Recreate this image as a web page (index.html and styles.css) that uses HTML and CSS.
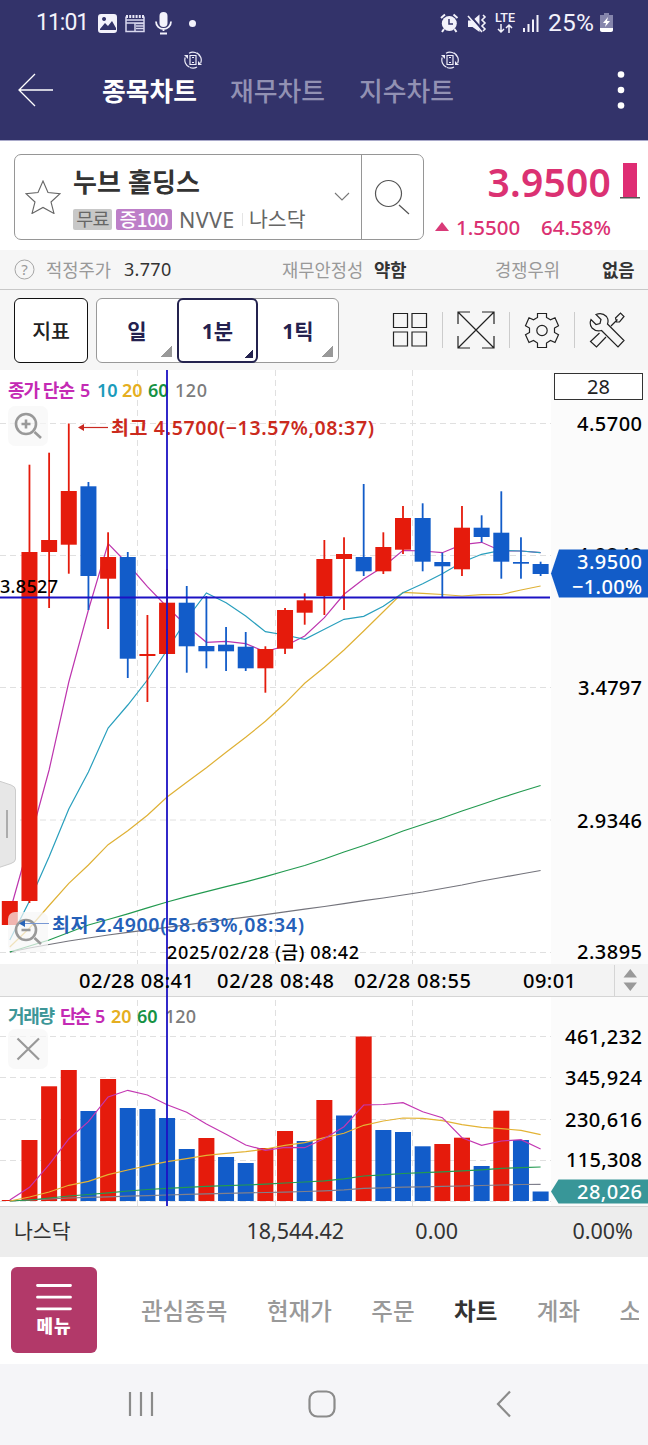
FILE: index.html
```html
<!DOCTYPE html>
<html lang="ko">
<head>
    <meta charset="UTF-8">
    <meta name="viewport" content="width=device-width, initial-scale=1.0">
    <title>종목차트</title>
    <link rel="stylesheet" href="styles.css">
</head>
<body>
    <header class="top">
        <div class="statusbar">
            <span class="clock">11:01</span>
            <svg class="status-left" width="102" height="26" viewBox="97 9 102 26">
                <path fill="#f3f2fb" fill-rule="evenodd" d="M101 13h13a3 3 0 0 1 3 3v13a3 3 0 0 1-3 3h-13a3 3 0 0 1-3-3V16a3 3 0 0 1 3-3zM100 28l5-6 3 3 4-5 4 7v2h-16zM104 16a2 2 0 1 0 .1 0z"/>
                <path fill="none" stroke="#d8d7ee" stroke-width="1.500" d="M126 15.500v15h18v-15M126 19h18M136 22.500h8M136 25h8M136 27.500h8M135 22v8M126 22h18"/>
                <path stroke="#e8e7f6" stroke-width="3" stroke-dasharray="2 1.200" d="M126 15.500h18"/>
                <rect x="159.500" y="11" width="8" height="15" rx="4" fill="#f3f2fb"/>
                <path fill="none" stroke="#f3f2fb" stroke-width="1.800" d="M156 20.500a7.500 7.500 0 0 0 15 0M163.500 28v2M160 32.500h7"/>
                <circle cx="192.500" cy="22.500" r="3.500" fill="#f3f2fb"/>
            </svg>
            <svg class="status-right" width="102" height="26" viewBox="439 9 102 26">
                <g fill="none" stroke="#f3f2fb" stroke-width="2">
                    <circle cx="449.300" cy="22.500" r="7.500" fill="#f3f2fb" stroke="none"/>
                    <path d="M441 17l4-3.500M457.500 17l-4-3.500M444 28l-2 3M454.500 28l2 3"/>
                    <path stroke="#33336a" stroke-width="1.500" d="M449 18v5h4"/>
                    <path fill="#f3f2fb" stroke="none" d="M468 19.500h4.500l7-6v17.500l-7-5H468z"/>
                    <path stroke="#33336a" stroke-width="2" d="M469.500 14l14 16"/>
                    <path stroke-width="1.600" d="M468 15l14 16M483 14l2 2-3 3 3 3-3 3 3 3-2 2"/>
                    <path stroke-width="1.500" d="M501 23v8M498 28l3 3 3-3M509 32v-8M506 27l3-3 3 3"/>
                    <path stroke-width="2" d="M524 27v4M528.500 23v8M533 18.500v12.500M537.500 14v17"/>
                </g>
                <text x="495" y="21" class="lte" textLength="20" lengthAdjust="spacingAndGlyphs">LTE</text>
            </svg>
            <span class="percent">25%</span>
            <svg width="13" height="20" viewBox="0 0 13 20">
                <path fill="#8585ac" d="M4 0h5v2h4v16H0V2h4z"/>
                <path fill="#fff" d="M0 15h13v2q0 2-2 2H2q-2 0-2-2zM8 4l-5 6h3l-1 4 5-6H7z"/>
            </svg>
        </div>
        <nav class="tabs">
            <svg class="back" width="36" height="34" viewBox="0 0 36 34">
                <path fill="none" stroke="#fff" stroke-width="1.300" d="M17 1L1 17l16 16M1 17h34"/>
            </svg>
            <span class="tab tab-on">종목차트
                <svg class="rotate" width="18" height="18" viewBox="0 0 18 18"><path fill="none" stroke="#eeedf8" stroke-width="1.200" d="M5.500 16.200A8 8 0 0 1 1.200 6.500M5 2.200A8 8 0 0 1 16 5.500M12.800 1.900A8 8 0 0 1 16.700 12M13 16a8 8 0 0 1-7 .5M6 4.500h6v9H6zM8 6.500h2M8 11.500h2"/><path fill="#eeedf8" d="M0 4h4v4zM18 14h-4v-4z"/></svg>
            </span>
            <span class="tab">재무차트</span>
            <span class="tab">지수차트
                <svg class="rotate" width="18" height="18" viewBox="0 0 18 18"><path fill="none" stroke="#eeedf8" stroke-width="1.200" d="M5.500 16.200A8 8 0 0 1 1.200 6.500M5 2.200A8 8 0 0 1 16 5.500M12.800 1.900A8 8 0 0 1 16.700 12M13 16a8 8 0 0 1-7 .5M6 4.500h6v9H6zM8 6.500h2M8 11.500h2"/><path fill="#eeedf8" d="M0 4h4v4zM18 14h-4v-4z"/></svg>
            </span>
            <svg class="more" width="8" height="40" viewBox="0 0 8 40" fill="#fff">
                <circle cx="4" cy="4.500" r="3.300"/><circle cx="4" cy="20" r="3.300"/><circle cx="4" cy="35.500" r="3.300"/>
            </svg>
        </nav>
    </header>

    <section class="stock">
        <div class="stock-box">
            <svg class="star" width="36" height="34" viewBox="0 0 36 34">
                <path fill="none" stroke="#666" stroke-width="1.100" d="M18 1l5 11.500 12 1.200-9 8.300 3 11.500-11-6-11 6 3-11.500-9-8.300 12-1.200z"/>
            </svg>
            <div class="stock-info">
                <div class="stock-name">누브 홀딩스</div>
                <div class="stock-meta">
                    <span class="tag tag-free">무료</span>
                    <span class="tag tag-margin">증100</span>
                    <span class="ticker">NVVE</span>
                    <span class="market">나스닥</span>
                </div>
            </div>
            <svg class="down" width="16" height="10" viewBox="0 0 16 10"><path fill="none" stroke="#777" stroke-width="1.100" d="M1 1l7 7 7-7"/></svg>
            <div class="search">
                <svg width="36" height="36" viewBox="0 0 36 36"><path fill="none" stroke="#555" stroke-width="1.200" d="M27.500 14.500a13 13 0 1 1-26 0a13 13 0 1 1 26 0M25 26l10 9"/></svg>
            </div>
        </div>
        <div class="price-box">
            <div class="price">3.9500</div>
            <div class="change">
                <svg width="14" height="9" viewBox="0 0 14 9"><path fill="#d93a78" d="M7 0l7 9H0z"/></svg>
                <span class="diff">1.5500</span>
                <span class="rate">64.58%</span>
            </div>
        </div>
        <svg class="mini" width="20" height="37" viewBox="0 0 20 37"><path fill="#df2d74" d="M3 0h14v34H3z"/><path fill="#555" d="M0 34h20v1.500H0z"/></svg>
    </section>

    <section class="facts">
        <svg width="21" height="21" viewBox="0 0 21 21"><circle cx="10.500" cy="10.500" r="9.500" fill="none" stroke="#a6a6a6"/><text x="10.500" y="16" class="help">?</text></svg>
        <span class="fact-label f1">적정주가</span><span class="fact-num">3.770</span>
        <span class="fact-label f2">재무안정성</span><b class="fact-value">약함</b>
        <span class="fact-label f3">경쟁우위</span><b class="fact-value f4">없음</b>
    </section>

    <section class="toolbar">
        <button class="indicator">지표</button>
        <div class="periods">
            <button class="period">일</button>
            <button class="period period-on">1분</button>
            <button class="period">1틱</button>
        </div>
        <div class="tools">
            <svg width="36" height="36" viewBox="0 0 36 36"><path d="M1.500 1.500h14v14h-14zM20 1.500h14.500v14H20zM1.500 20h14v14h-14zM20 20h14.500v14H20z"/></svg>
            <i></i>
            <svg width="38" height="38" viewBox="0 0 38 38"><path d="M1 1l36 36M37 1L1 37M1 13V1h12M25 1h12v12M37 25v12H25M13 37H1V25"/></svg>
            <i></i>
            <svg width="36" height="36" viewBox="0 0 36 36"><path d="M13.500 1.500h9v4l4 2.300 4.500-2 3.500 8-4 2.200v4.500l4 2.300-3.500 7.700-4.500-2-4 2.500v4.500h-9V31l-4-2.500-4.500 2-3.500-7.700 4-2.300V16l-4-2.200 3.500-8 4.500 2 4-2.300z"/><circle cx="18" cy="18.500" r="5.200"/></svg>
            <i></i>
            <svg width="36" height="36" viewBox="0 0 36 36"><path d="M7 2.500q6-2.500 10.500 2Q20 8 18.500 12L35 28.500 29 35 12.500 18.500Q7 20 3 16 0 12 2 7.500l5 5 4-1 1-4zM10.500 21L1.500 29.500l6 5.500 9.500-10M22 14l6.500-6.500M26.500 6l5-5 3.500 3.500-4.500 5.500h-3z"/></svg>
        </div>
    </section>

    <svg class="chart" width="648" height="836" viewBox="0 370 648 836">
        <rect x="551" y="370" width="97" height="836" fill="#fbfbfb"/>
        <g class="grid">
            <path d="M0 423.500h551M0 555.500h551M0 687.500h551M0 820h551M0 952.500h551M0 1036.500h551M0 1077.500h551M0 1119.500h551M0 1160.500h551M0 1201.500h551"/>
            <path d="M137.500 370v836M275.500 370v836M412.500 370v836"/>
        </g>

        <g id="averages" class="averages"></g>
        <g id="candles"></g>
        <g id="volumes"></g>
        <g id="volumeAverages" class="averages"></g>

        <rect x="0" y="964" width="648" height="33" fill="#f3f3f3"/>
        <path stroke="#d5d5d5" d="M0 996.500h648M614.500 965v31"/>
        <path fill="#999" d="M623.500 977.500h13.500l-6.700-8.500zM623.500 982.500h13.500l-6.700 8.500z"/>

        <g class="legend">
            <text x="8" y="397" textLength="67" fill="#c42ab4">종가 단순</text>
            <text x="80" y="397" fill="#c42ab4">5</text>
            <text x="97" y="397" fill="#1b9bbb">10</text>
            <text x="122" y="397" fill="#e5ae20">20</text>
            <text x="148" y="397" fill="#169244">60</text>
            <text x="175" y="397" textLength="32" fill="#7b7b7b" class="thin">120</text>
            <text x="8" y="1023" textLength="47" fill="#3d9697">거래량</text>
            <text x="60" y="1023" textLength="31" fill="#c42ab4">단순</text>
            <text x="95" y="1023" fill="#c42ab4">5</text>
            <text x="111" y="1023" fill="#e5ae20">20</text>
            <text x="137" y="1023" fill="#169244">60</text>
            <text x="165" y="1023" textLength="31" fill="#7b7b7b" class="thin">120</text>
        </g>

        <g class="control">
            <rect x="8" y="406" width="40" height="40" rx="7"/>
            <circle cx="26" cy="424" r="10"/><path d="M21.500 424h9M26 419.500v9M34.500 432l6.500 6"/>
            <rect x="8" y="912" width="40" height="40" rx="7"/>
            <circle cx="26" cy="930" r="10"/><path d="M21.500 930h9M34.500 938l6.500 6"/>
            <rect x="8" y="1029" width="40" height="40" rx="7"/>
            <path class="close" d="M17.500 1038.500l21.500 21M39 1038.500l-21.500 21"/>
        </g>

        <path stroke="#c92820" stroke-width="1.200" d="M83 427.500h25"/><path fill="#c92820" d="M78 427.500l6-3.500v7z"/>
        <text class="mark" x="111" y="435" textLength="263" fill="#cb2a1d">최고 4.5700(−13.57%,08:37)</text>
        <path stroke="#7898d4" d="M24 923.500h25"/><path fill="#2864b8" d="M19 923.500l6-3.500v7z"/>
        <text class="mark" x="52" y="932" textLength="252" fill="#2560b8">최저 2.4900(58.63%,08:34)</text>

        <path fill="#e7e7e7" stroke="#ccc" d="M-1 781l12 4q4.500 1.500 4.500 5v69q0 3-4.500 4.500L-1 867.500z"/>
        <path stroke="#999" stroke-width="1.500" d="M7 810v28"/>

        <path stroke="#1c12c4" stroke-width="1.800" d="M167 370v836M0 597.500h550"/>
        <text class="cross" x="0" y="593" textLength="58">3.8527</text>
        <text class="cross" x="167" y="959" textLength="192">2025/02/28 (금) 08:42</text>

        <rect x="554.500" y="373.500" width="88" height="26" fill="#fff" stroke="#333"/>
        <text x="587" y="394" class="count">28</text>
        <g class="axis">
            <text x="577" y="431" textLength="65">4.5700</text>
            <text x="577" y="562" textLength="65">4.0248</text>
            <text x="578" y="695" textLength="64">3.4797</text>
            <text x="577" y="828" textLength="65">2.9346</text>
            <text x="577" y="959" textLength="65">2.3895</text>
            <text x="79" y="988" textLength="115">02/28 08:41</text>
            <text x="217" y="988" textLength="117">02/28 08:48</text>
            <text x="354" y="988" textLength="117">02/28 08:55</text>
            <text x="523" y="988" textLength="53">09:01</text>
            <text x="565" y="1044" textLength="77">461,232</text>
            <text x="565" y="1085" textLength="77">345,924</text>
            <text x="565" y="1127" textLength="77">230,616</text>
            <text x="566" y="1167" textLength="76">115,308</text>
        </g>
        <path fill="#125cc8" d="M551 573.500l8-24h89V597.500h-89z"/>
        <path fill="#389698" d="M551 1191.500l7.500-12H648v24h-89.500z"/>
        <g class="axis axis-light">
            <text x="577" y="569" textLength="65">3.9500</text>
            <text x="572" y="594" textLength="70">−1.00%</text>
            <text x="577" y="1199" textLength="65">28,026</text>
        </g>
    </svg>

    <section class="index-row">
        <span>나스닥</span><span>18,544.42</span><span>0.00</span><span>0.00%</span>
    </section>

    <nav class="menu">
        <button class="menu-button">
            <svg width="36" height="27" viewBox="0 0 36 27"><path stroke="#fff" stroke-width="2.800" stroke-linecap="round" d="M1.500 1.500h33M1.500 13.200h33M1.500 24.800h33"/></svg>
            <span>메뉴</span>
        </button>
        <div class="menu-items">
            <span>관심종목</span><span>현재가</span><span>주문</span><span class="menu-on">차트</span><span>계좌</span><span class="cut">소</span>
        </div>
    </nav>

    <footer class="system-nav">
        <svg width="26" height="28" viewBox="0 0 26 28"><path d="M2 2v24M13 2v24M24 2v24"/></svg>
        <svg width="28" height="28" viewBox="0 0 28 28"><rect x="1.500" y="1.500" width="25" height="25" rx="8"/></svg>
        <svg width="16" height="28" viewBox="0 0 16 28"><path d="M14 1.500L2 14l12 12.500"/></svg>
    </footer>

    <script>
        const RED = '#e51b0c';
        const BLUE = '#125cc9';
        const STEP = 19.66;
        const FIRST = 9.8;
        const BASE = 1201;

        // color, high, body top, body bottom, low, volume top
        const bars = [
            ['r', 901, 901, 925, 925, 1200],
            ['r', 464.7, 552, 901, 903, 1140],
            ['r', 452.7, 540, 552, 608, 1086.3],
            ['r', 423.5, 491, 544.7, 573.7, 1070],
            ['b', 482, 486.3, 576, 610, 1111],
            ['r', 532.3, 557, 578.7, 629, 1079],
            ['b', 552, 557, 658.7, 678, 1108],
            ['r', 615, 654, 656, 702, 1109, 'b'],
            ['r', 569, 602.7, 654, 654, 1118, 'b'],
            ['b', 586, 602.7, 646.3, 672.7, 1149],
            ['b', 596, 646, 651.3, 668.3, 1138, 'r'],
            ['b', 627, 644.7, 651.3, 671, 1157],
            ['b', 632, 646.7, 668.3, 671, 1163],
            ['r', 646.3, 649, 668.3, 692.7, 1148],
            ['r', 608, 610, 648.7, 654, 1131],
            ['r', 593.3, 600.3, 612.7, 624.7, 1141, 'b'],
            ['r', 540, 559, 596, 615, 1100],
            ['r', 537.3, 554, 559, 610, 1115.5, 'b'],
            ['b', 484, 557, 571.3, 576, 1036.5, 'r'],
            ['r', 532.3, 547, 571.3, 574, 1130, 'b'],
            ['r', 506, 518, 549.7, 554, 1132, 'b'],
            ['b', 503.3, 518, 561.7, 571.3, 1146.3],
            ['b', 552.7, 562, 566.3, 597.3, 1144, 'r'],
            ['r', 506, 527.7, 569.3, 576, 1137.7],
            ['b', 515.3, 527.7, 537, 542.3, 1166],
            ['b', 491.3, 532.7, 561.7, 578.7, 1110.7, 'r'],
            ['b', 537.3, 562, 563.7, 578.7, 1140],
            ['b', 561.7, 564, 574, 576, 1191.5]
        ];

        const priceLines = {
            '#74747c': [952, 948, 944.5, 941, 938, 935, 932.3, 929.8, 927.3, 924.8, 922.2, 919.7, 917.1, 914.6, 911.9, 909.2, 906.5, 903.6, 900.6, 898, 895, 892, 888.5, 885, 881, 877.5, 874, 870.5],
            '#239a50': [952, 946, 940, 932.5, 925, 919.5, 913.8, 907.9, 902, 896.6, 891.7, 886.7, 881.8, 876.6, 871, 865.5, 859, 852, 845.5, 838.5, 831, 824.5, 818, 811, 804.5, 797.8, 791.5, 785.5],
            '#dfb135': [947, 928, 905.5, 883.3, 865, 844.7, 830.7, 815.3, 797, 782.3, 767.7, 752.3, 737.3, 721.3, 703.3, 683.3, 667.3, 650, 631, 611.7, 592.3, 593.3, 594.5, 596, 594.7, 594.5, 590, 586],
            '#bd35ae': [912, 842, 770, 682, 610, 543.7, 564, 586.7, 607, 626, 642.3, 641.3, 643.7, 651.7, 646, 636, 617.7, 594.3, 579, 566.7, 550.3, 551, 552.7, 544.7, 542.3, 551, 551, 552.7],
            '#299fbd': [940, 901, 856.7, 809, 772, 728, 705, 680, 650, 619, 593, 602.7, 616, 631.7, 635, 639.3, 629.3, 619.3, 616.3, 606.3, 592.7, 583.7, 573.7, 562.3, 554.3, 550.3, 551, 552.7]
        };

        const volumeLines = {
            '#80808c': [1201, 1200, 1199, 1198, 1197.3, 1196.8, 1196.2, 1195.6, 1195, 1194.4, 1193.9, 1193.4, 1192.9, 1192.5, 1192.2, 1191.5, 1190.8, 1189.8, 1188.3, 1187.8, 1187.2, 1186.8, 1186.4, 1186, 1185.5, 1185, 1184.5, 1184.3],
            '#239a50': [1201, 1200, 1198, 1196, 1194.5, 1192.8, 1191, 1189.5, 1188.3, 1187.3, 1186.4, 1185.6, 1185, 1184.2, 1183, 1182, 1180.8, 1178.9, 1176, 1174.8, 1173.5, 1172.6, 1171.8, 1170.9, 1169.8, 1168.3, 1167.6, 1167],
            '#e3b335': [1201, 1197, 1192, 1185.3, 1181.3, 1174.7, 1170, 1165.7, 1161.7, 1158.7, 1155.3, 1153.3, 1151.7, 1149, 1145.3, 1142.7, 1137.7, 1133.3, 1125.3, 1121, 1118, 1118.3, 1120.7, 1124.7, 1127.3, 1128.7, 1130.3, 1134.7],
            '#c337b2': [1200, 1187.3, 1164.7, 1139, 1121.7, 1097, 1090.3, 1095, 1104.7, 1112.3, 1124, 1134.3, 1145, 1150.3, 1147.3, 1147.7, 1138.5, 1126.7, 1105, 1104.5, 1102.7, 1111.7, 1117.7, 1137.7, 1145.3, 1141, 1139.7, 1149]
        };

        function rect(x, y, w, h, fill) {
            return `<rect x="${x}" y="${y}" width="${w}" height="${h}" fill="${fill}"/>`;
        }

        function drawLines(id, lines) {
            let html = '';
            for (const color in lines) {
                const points = lines[color].map((y, i) => (FIRST + i * STEP).toFixed(1) + ',' + y).join(' ');
                html += `<polyline points="${points}" stroke="${color}"/>`;
            }
            document.getElementById(id).innerHTML = html;
        }

        let candles = '';
        let volumes = '';
        bars.forEach(([kind, high, top, bottom, low, volume, volumeKind], i) => {
            const x = FIRST + i * STEP;
            const color = kind === 'r' ? RED : BLUE;
            candles += rect(x - 0.9, high, 1.8, low - high, color);
            candles += rect(x - 8, top, 16, bottom - top, color);
            volumes += rect(x - 8, volume, 16, BASE - volume, (volumeKind || kind) === 'r' ? RED : BLUE);
        });
        document.getElementById('candles').innerHTML = candles;
        document.getElementById('volumes').innerHTML = volumes;
        drawLines('averages', priceLines);
        drawLines('volumeAverages', volumeLines);
    </script>
</body>
</html>
```
FILE: styles.css
```css
* {
    box-sizing: border-box;
}
body {
    margin: 0;
    width: 648px;
    height: 1445px;
    overflow: hidden;
    font-family: "Noto Sans", "Noto Sans CJK KR", sans-serif;
    color: #333;
    background-color: #fff;
    white-space: nowrap;
}
button {
    padding: 0;
    font-family: inherit;
    background-color: #fff;
}
svg {
    display: block;
    flex: none;
}
.top {
    height: 141px;
    background-color: #33336a;
    border-bottom: 1px solid #a9a9ca;
}
.statusbar {
    display: flex;
    align-items: center;
    height: 45px;
    padding-left: 36px;
    color: #f3f2fb;
    font-family: Roboto, sans-serif;
    font-size: 23px;
}
.clock {
    width: 61px;
    letter-spacing: -1px;
}
.status-right {
    margin-left: 240px;
}
.lte {
    fill: #f3f2fb;
    font-size: 12px;
    font-weight: 500;
}
.percent {
    width: 52px;
    margin-left: 7px;
    font-size: 24.500px;
    letter-spacing: 0.2px;
}
.tabs {
    display: flex;
    align-items: center;
    height: 90px;
    padding-left: 18px;
}
.tab {
    position: relative;
    width: 129px;
    font-family: "Noto Sans CJK KR", sans-serif;
    font-size: 25.800px;
    font-weight: 500;
    line-height: 36px;
    color: #9291b3;
}
.tab-on {
    margin-left: 48px;
    width: 128px;
    color: #fff;
    font-weight: 700;
}
.rotate {
    position: absolute;
    left: 82px;
    top: -21px;
}
.more {
    margin-left: 129px;
}
.stock {
    display: flex;
    height: 109px;
    padding: 13px 0 0 14px;
}
.stock-box {
    display: flex;
    align-items: center;
    width: 410px;
    height: 86px;
    border: 1px solid #969696;
    border-radius: 7px;
}
.star {
    margin-left: 10px;
}
.stock-info {
    width: 257px;
    margin-left: 12px;
}
.stock-name {
    height: 44px;
    font-family: "Noto Sans CJK KR", sans-serif;
    font-size: 26px;
    font-weight: 700;
    line-height: 38px;
}
.stock-meta {
    display: flex;
    align-items: center;
    height: 26px;
    font-size: 20px;
    line-height: 24px;
    color: #666;
}
.tag {
    height: 21px;
    border-radius: 2px;
    font-family: "Noto Sans CJK KR", sans-serif;
    line-height: 19px;
    text-align: center;
    letter-spacing: -0.8px;
}
.tag-free {
    width: 39px;
    background-color: #c8c8c8;
    font-size: 18.500px;
}
.tag-margin {
    width: 56px;
    margin-left: 4px;
    background-color: #bd7fc8;
    color: #fff;
    font-size: 19px;
    font-weight: 500;
    letter-spacing: -0.3px;
}
.ticker {
    width: 64px;
    margin-left: 7px;
    font-size: 21.500px;
    letter-spacing: 0.4px;
    border-right: 1px solid #e5e5e5;
    line-height: 13px;
}
.market {
    margin-left: 6px;
    font-size: 20.500px;
}
.down {
    margin-left: 4px;
}
.search {
    display: flex;
    align-items: center;
    margin-left: 11px;
    padding-left: 12px;
    height: 84px;
    border-left: 1px solid #969696;
}
.price-box {
    width: 187px;
    text-align: right;
    color: #db3172;
}
.price {
    height: 53px;
    font-size: 39px;
    font-weight: 600;
    line-height: 55px;
    letter-spacing: 0.2px;
}
.change {
    display: flex;
    align-items: center;
    height: 39px;
    margin-left: 11px;
    font-size: 20.500px;
    font-weight: 500;
}
.diff {
    width: 85px;
    margin-left: 7px;
    text-align: left;
}
.mini {
    margin: 9px 0 0 9px;
}
.facts {
    display: flex;
    align-items: center;
    height: 40px;
    padding: 0 0 1px 14px;
    background-color: #f6f6f6;
    border-bottom: 1px solid #c8c8c8;
    font-size: 18px;
}
.help {
    fill: #999;
    font-size: 15px;
    text-anchor: middle;
}
.fact-label {
    color: #999;
    font-size: 17.700px;
}
.f1 {
    width: 78px;
    margin-left: 11px;
}
.fact-num {
    width: 158px;
    letter-spacing: 0.3px;
}
.f2 {
    width: 92px;
}
.fact-value {
    width: 121px;
    font-size: 17.700px;
}
.f3 {
    width: 107px;
}
.f4 {
    width: auto;
}
.toolbar {
    display: flex;
    align-items: center;
    height: 80px;
    padding-left: 14px;
    background-color: #f6f6f6;
}
.indicator {
    width: 74px;
    height: 65px;
    border: 1px solid #111;
    border-radius: 6px;
    font-size: 20.500px;
    font-weight: 500;
    color: #222;
}
.periods {
    display: flex;
    align-items: center;
    width: 243px;
    height: 65px;
    margin-left: 8px;
    background-color: #fff;
    border: 1px solid #999;
    border-radius: 6px;
}
.period {
    width: 80px;
    height: 63px;
    border: 0;
    border-radius: 6px;
    font-size: 21px;
    font-weight: 700;
    color: #24214f;
    background: linear-gradient(135deg, transparent 50%, #999 50%) right 5px bottom 5px / 11px 11px no-repeat;
}
.period-on {
    width: 81px;
    height: 65px;
    border: 2px solid #24234f;
    background: linear-gradient(135deg, transparent 50%, #24234f 50%) right 3px bottom 3px / 8px 8px no-repeat;
}
.tools {
    display: flex;
    align-items: center;
    margin-left: 53px;
    gap: 14px;
    fill: none;
    stroke: #222;
    stroke-width: 1.200;
}
.tools i {
    width: 1px;
    height: 36px;
    background-color: #ccc;
}
.chart {
    font-family: "Noto Sans", "Noto Sans CJK KR", sans-serif;
    font-weight: 500;
}
.grid path {
    fill: none;
    stroke: #e0e0e0;
    stroke-dasharray: 6 4;
}
.averages {
    fill: none;
    stroke-width: 1.200;
}
.legend text {
    font-size: 18px;
    font-weight: 600;
}
.legend .thin {
    font-weight: 500;
}
.control {
    fill: none;
    stroke: #999;
    stroke-width: 2.600;
}
.control rect {
    fill: #f7f7f7;
    fill-opacity: 0.7;
    stroke: none;
}
.control .close {
    stroke-width: 2.200;
}
.mark {
    font-size: 19.500px;
    font-weight: 600;
}
.cross {
    font-size: 18px;
    fill: #000;
}
.count {
    font-size: 20px;
    font-weight: 400;
    fill: #222;
}
.axis {
    font-size: 20px;
    fill: #000;
}
.axis-light {
    fill: #fff;
}
.index-row {
    display: grid;
    grid-template-columns: 120px 210px 114px 175px;
    align-items: center;
    height: 51px;
    padding: 0 0 4px 14px;
    background-color: #ededed;
    border-top: 1px solid #d4d4d4;
    font-size: 21.500px;
    text-align: right;
}
.index-row span:first-child {
    font-size: 20.500px;
    text-align: left;
}
.menu {
    display: flex;
    align-items: center;
    height: 107px;
    padding: 0 0 2px 11px;
}
.menu-button {
    display: flex;
    flex-direction: column;
    align-items: center;
    width: 86px;
    height: 86px;
    padding-top: 17px;
    border: 0;
    border-radius: 6px;
    background-color: #b23969;
    color: #fff;
    font-size: 18px;
    font-weight: 900;
    line-height: 30px;
    letter-spacing: 1px;
}
.menu-items {
    display: flex;
    gap: 39.500px;
    margin-left: 44px;
    font-family: "Noto Sans CJK KR", sans-serif;
    font-size: 23.500px;
    font-weight: 500;
    color: #999;
}
.menu-on {
    color: #333;
    font-weight: 700;
}
.cut {
    width: 19px;
    overflow: hidden;
}
.system-nav {
    display: flex;
    align-items: center;
    height: 82px;
    padding: 0 0 1px 128px;
    gap: 154px;
    background-color: #f5f5f8;
    border-bottom: 1px solid #bbb;
    fill: none;
    stroke: #8b8b8b;
    stroke-width: 2.200;
}
.system-nav svg:last-child {
    margin-left: 6px;
}
```
